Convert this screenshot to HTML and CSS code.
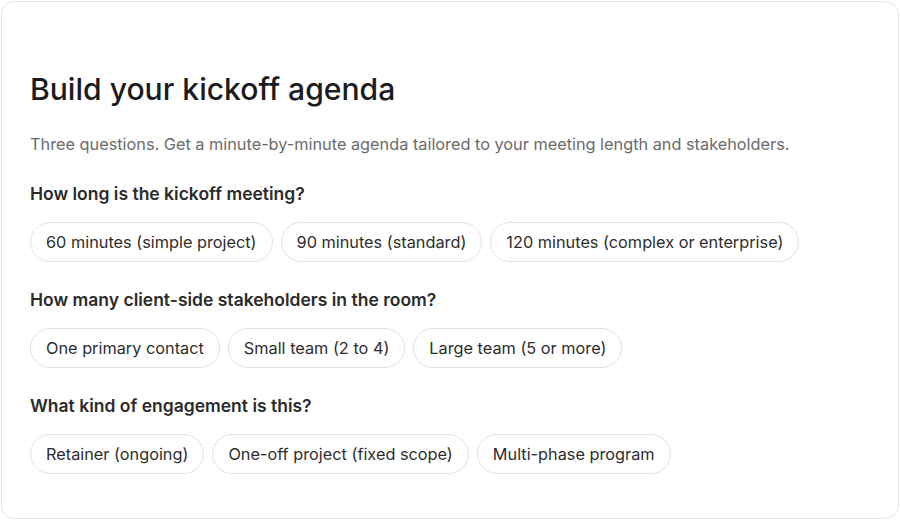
FILE: index.html
```html
<!DOCTYPE html>
<html>
<head>
<meta charset="utf-8">
<link rel="stylesheet" href="styles.css">
</head>
<body>
<div class="card">
  <h1 class="title">Build your kickoff agenda</h1>
  <p class="lead">Three questions. Get a minute-by-minute agenda tailored to your meeting length and stakeholders.</p>
  <div class="question">
    <h2 class="q-label">How long is the kickoff meeting?</h2>
    <div class="chips">
      <button class="chip">60 minutes (simple project)</button>
      <button class="chip">90 minutes (standard)</button>
      <button class="chip">120 minutes (complex or enterprise)</button>
    </div>
  </div>
  <div class="question">
    <h2 class="q-label">How many client-side stakeholders in the room?</h2>
    <div class="chips">
      <button class="chip">One primary contact</button>
      <button class="chip">Small team (2 to 4)</button>
      <button class="chip">Large team (5 or more)</button>
    </div>
  </div>
  <div class="question">
    <h2 class="q-label">What kind of engagement is this?</h2>
    <div class="chips">
      <button class="chip">Retainer (ongoing)</button>
      <button class="chip">One-off project (fixed scope)</button>
      <button class="chip">Multi-phase program</button>
    </div>
  </div>
</div>
</body>
</html>
```

FILE: styles.css
```css
html, body {
  margin: 0;
  padding: 0;
  background: #ffffff;
}
body {
  font-family: Inter, "Noto Sans", sans-serif;
  color: #1f1f1f;
  padding: 1px;
}
.card {
  box-sizing: border-box;
  width: 898px;
  height: 518px;
  border: 1px solid #e6e6e6;
  border-radius: 14px;
  padding: 69px 28px 0 28px;
}
.title {
  margin: 0;
  font-size: 30.1px;
  font-weight: 500;
  line-height: 36px;
  color: #1c1c1c;
}
.lead {
  margin: 26px 0 0 0;
  font-size: 16.3px;
  line-height: 22px;
  color: #6b6b6b;
}
.question {
  margin-top: 28px;
}
.question + .question {
  margin-top: 27px;
}
.q-label {
  margin: 0;
  font-size: 17.5px;
  font-weight: 600;
  line-height: 22px;
  color: #2b2b2b;
}
.chips {
  display: flex;
  flex-wrap: wrap;
  gap: 8px;
  margin-top: 17px;
}
.chip {
  font-family: inherit;
  font-size: 16.3px;
  line-height: 20px;
  color: #2e2e2e;
  background: #ffffff;
  border: 1px solid #e3e3e3;
  border-radius: 999px;
  padding: 9px 15px;
  height: 40px;
  box-sizing: border-box;
}
```
